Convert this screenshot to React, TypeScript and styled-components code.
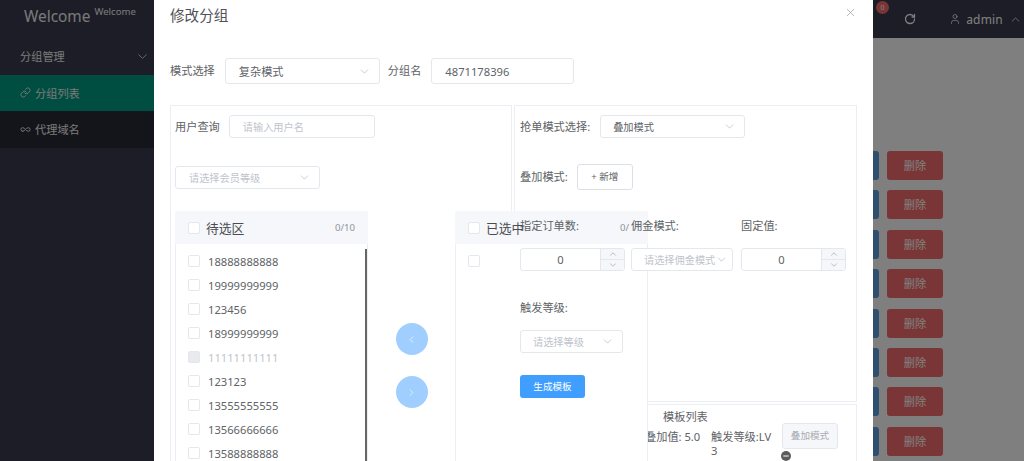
import React from "react";
import styled, { createGlobalStyle } from "styled-components";
import { ChevronDown, ChevronUp, ChevronLeft, ChevronRight, Link, Infinity as InfinityIcon, RotateCw, User, X, Minus } from "lucide-react";

const Global = createGlobalStyle`
  html, body { margin: 0; padding: 0; height: 100%; }
  body { font-family: "Noto Sans", "Noto Sans CJK SC", sans-serif; color: #606266; }
  #root { height: 100%; }
  * { box-sizing: border-box; }
`;

const Page = styled.div`
  position: relative;
  display: flex;
  width: 1024px;
  height: 461px;
  overflow: hidden;
  background: #fff;
`;

const Sidebar = styled.aside`
  width: 154px;
  flex: none;
  background: #383a4c;
  color: #f2f2f2;
`;
const Logo = styled.div`
  height: 38px;
  padding: 6px 0 0 24px;
  font-size: 15.4px;
  line-height: 22px;
  white-space: nowrap;
  sup { font-size: 9.6px; margin-left: 4px; position: relative; top: -1px; vertical-align: 6px; line-height: 0; }
`;
const MenuRow = styled.div<{ $bg?: string }>`
  display: flex;
  align-items: center;
  gap: 4px;
  height: 36.5px;
  padding-left: 20px;
  padding-right: 4px;
  font-size: 11.2px;
  background: ${(p) => p.$bg || "transparent"};
`;
const MenuLabel = styled.span`
  flex: 1;
`;

const Main = styled.main`
  flex: 1;
  display: flex;
  flex-direction: column;
  min-width: 0;
`;
const TopBar = styled.header`
  height: 38px;
  flex: none;
  display: flex;
  align-items: center;
  justify-content: flex-end;
  background: #383a4c;
  color: #fff;
  padding-right: 2px;
  font-size: 12px;
`;
const Badge = styled.span`
  position: absolute;
  left: 876px;
  top: 1px;
  width: 13px;
  height: 13px;
  border-radius: 50%;
  background: #f56c6c;
  font-size: 7px;
  line-height: 13px;
  text-align: center;
  color: #fff;
`;
const Refresh = styled.span`
  display: flex;
  margin-right: 33px;
`;
const UserName = styled.span`
  margin: 0 6px 0 5px;
  letter-spacing: 0.2px;
`;
const Rows = styled.div`
  display: flex;
  flex-direction: column;
  gap: 10.4px;
  padding: 113px 81px 0 0;
  align-items: flex-end;
`;
const ActionRow = styled.div`
  display: flex;
  gap: 8px;
  flex: none;
`;
const ActionButton = styled.div<{ $bg: string }>`
  width: 56px;
  height: 29px;
  border-radius: 3px;
  background: ${(p) => p.$bg};
  color: #fff;
  font-size: 11.2px;
  line-height: 29px;
  text-align: center;
`;

const Overlay = styled.div`
  position: absolute;
  inset: 0;
  background: rgba(0, 0, 0, 0.5);
`;
const Dialog = styled.div`
  width: 719px;
  height: 461px;
  margin-left: 154px;
  background: #fff;
  padding: 0 16px;
  overflow: hidden;
  position: relative;
`;
const Title = styled.div`
  font-size: 14.6px;
  line-height: 20px;
  padding-top: 5px;
  color: #4f5157;
`;
const Close = styled.span`
  position: absolute;
  right: 16px;
  top: 6px;
  display: flex;
  color: #909399;
`;
const TopForm = styled.div`
  display: flex;
  align-items: center;
  height: 26px;
  margin-top: 33px;
`;
const Label = styled.span`
  font-size: 11.2px;
  line-height: 16px;
  white-space: nowrap;
  color: #606266;
`;
const Field = styled.div<{ $w: number; $h?: number; $ml?: number; $mr?: number; $muted?: boolean; $pl?: number }>`
  flex: none;
  display: flex;
  align-items: center;
  justify-content: space-between;
  width: ${(p) => p.$w}px;
  height: ${(p) => p.$h || 23}px;
  margin-left: ${(p) => p.$ml || 0}px;
  margin-right: ${(p) => p.$mr || 0}px;
  padding: 0 8px 0 ${(p) => p.$pl || 13}px;
  border: 1px solid #e4e7ed;
  border-radius: 3px;
  background: #fff;
  font-size: ${(p) => (p.$h ? 11.2 : 10.2)}px;
  color: ${(p) => (p.$muted ? "#c0c4cc" : "#606266")};
  white-space: nowrap;
  overflow: hidden;
  svg { flex: none; color: #a8abb2; }
`;
const Columns = styled.div`
  display: flex;
  gap: 2px;
  margin-top: 21px;
  align-items: flex-start;
`;
const LeftPanel = styled.section`
  width: 342px;
  height: 400px;
  flex: none;
  border: 1px solid #ebeef5;
  padding: 9px 4px;
`;
const RightColumn = styled.div`
  width: 343px;
  flex: none;
  display: flex;
  flex-direction: column;
  gap: 2px;
`;
const RightPanel = styled.section`
  height: 297px;
  border: 1px solid #ebeef5;
`;
const FormLayer = styled.div`
  position: relative;
  z-index: 2;
  padding: 9px 5px;
`;
const Row = styled.div<{ $mt?: number; $gap?: number }>`
  display: flex;
  align-items: center;
  gap: ${(p) => p.$gap || 0}px;
  margin-top: ${(p) => p.$mt || 0}px;
`;
const Transfer = styled.div`
  position: relative;
  z-index: 1;
  display: flex;
  width: 473px;
  margin-top: 22px;
`;
const TransferPanel = styled.div`
  width: 193px;
  height: 309px;
  flex: none;
  background: #fff;
  border: 1px solid #ebeef5;
  border-radius: 3px 3px 0 0;
  position: relative;
`;
const TransferHead = styled.div`
  display: flex;
  align-items: center;
  height: 33px;
  margin: -1px -1px 0;
  padding: 0 13px;
  background: #f5f7fa;
  border-radius: 3px 3px 0 0;
`;
const HeadTitle = styled.span`
  flex: 1;
  margin-left: 6px;
  font-size: 12.8px;
  color: #4a4c52;
`;
const Count = styled.span<{ $mr?: number }>`
  font-size: 9.6px;
  color: #909399;
  margin-right: ${(p) => p.$mr || 0}px;
`;
const Check = styled.span<{ $off?: boolean }>`
  width: 12px;
  height: 12px;
  flex: none;
  border: 1px solid #e4e7ed;
  border-radius: 2px;
  background: ${(p) => (p.$off ? "#e9eaee" : "#fff")};
`;
const List = styled.div`
  padding-top: 5px;
`;
const Item = styled.div<{ $off?: boolean }>`
  display: flex;
  align-items: center;
  gap: 8px;
  height: 24px;
  padding-left: 12px;
  font-size: 11.2px;
  color: ${(p) => (p.$off ? "#c0c4cc" : "#606266")};
`;
const Scrollbar = styled.span`
  position: absolute;
  right: 0;
  top: 37px;
  bottom: 0;
  width: 2.5px;
  background: #666;
`;
const Arrows = styled.div`
  width: 87px;
  flex: none;
  display: flex;
  flex-direction: column;
  align-items: center;
  justify-content: center;
  gap: 21px;
  height: 309px;
`;
const Round = styled.span`
  width: 32px;
  height: 32px;
  border-radius: 50%;
  background: #a0cfff;
  color: #fff;
  display: flex;
  align-items: center;
  justify-content: center;
`;
const PlainButton = styled.div`
  width: 56px;
  height: 26px;
  border: 1px solid #dcdfe6;
  border-radius: 3px;
  font-size: 9.6px;
  line-height: 24px;
  text-align: center;
  color: #606266;
`;
const Triple = styled.div`
  display: grid;
  grid-template-columns: 105px 102px 105px;
  column-gap: 6px;
  margin-top: 28px;
  row-gap: 14px;
  & > *:nth-child(3n) { margin-left: 2px; }
`;
const Stepper = styled.div`
  display: flex;
  width: 105px;
  height: 23px;
  border: 1px solid #e4e7ed;
  border-radius: 3px;
  overflow: hidden;
  background: #fff;
`;
const StepValue = styled.span`
  flex: 1;
  text-align: center;
  font-size: 11.2px;
  line-height: 21px;
`;
const StepControls = styled.div`
  width: 24px;
  display: flex;
  flex-direction: column;
  background: #f5f7fa;
  border-left: 1px solid #e4e7ed;
  span {
    flex: 1;
    display: flex;
    align-items: center;
    justify-content: center;
    color: #909399;
  }
  span + span { border-top: 1px solid #e4e7ed; }
`;
const Primary = styled.div`
  width: 65px;
  height: 23px;
  margin-top: 22px;
  background: #409eff;
  border-radius: 3px;
  color: #fff;
  font-size: 9.6px;
  line-height: 23px;
  text-align: center;
`;
const TemplatePanel = styled.section`
  height: 60px;
  border: 1px solid #ebeef5;
  position: relative;
`;
const TemplateTitle = styled.div`
  font-size: 11.2px;
  line-height: 16px;
  padding: 4px 0 0 148px;
`;
const TemplateRow = styled.div`
  display: flex;
  align-items: flex-start;
  padding: 5px 0 0 130px;
  font-size: 11.2px;
  line-height: 14px;
`;
const TemplateValue = styled.span`
  width: 66px;
  flex: none;
  white-space: nowrap;
`;
const TemplateLevel = styled.span`
  width: 62px;
  flex: none;
`;
const TemplateAction = styled.div`
  margin: -7px 0 0 9px;
  display: flex;
  flex-direction: column;
  align-items: flex-start;
`;
const MutedButton = styled(PlainButton)`
  color: #a8abb2;
  background: #f5f7fa;
  border-color: #e4e7ed;
`;
const MinusDot = styled.span`
  width: 10px;
  height: 10px;
  margin: 2px 0 0 -1px;
  border-radius: 50%;
  background: #5c5c5c;
  color: #fff;
  display: flex;
  align-items: center;
  justify-content: center;
`;

const candidates = ["18888888888", "19999999999", "123456", "18999999999", "11111111111", "123123", "13555555555", "13566666666", "13588888888"];
const rows = [0, 1, 2, 3, 4, 5, 6, 7];

function NumberStep() {
  return (
    <Stepper>
      <StepValue>0</StepValue>
      <StepControls>
        <span><ChevronUp size={10} strokeWidth={1.4} /></span>
        <span><ChevronDown size={10} strokeWidth={1.4} /></span>
      </StepControls>
    </Stepper>
  );
}

export default function App() {
  return (
    <Page>
      <Global />
      <Sidebar>
        <Logo>Welcome<sup>Welcome</sup></Logo>
        <MenuRow>
          <MenuLabel>分组管理</MenuLabel>
          <ChevronDown size={15} strokeWidth={1.3} />
        </MenuRow>
        <MenuRow $bg="#009a82">
          <Link size={11} strokeWidth={2} />
          分组列表
        </MenuRow>
        <MenuRow $bg="#282a34">
          <InfinityIcon size={11} strokeWidth={2} />
          代理域名
        </MenuRow>
      </Sidebar>
      <Main>
        <TopBar>
          <Refresh><RotateCw size={12} strokeWidth={2.6} /></Refresh>
          <User size={12} strokeWidth={1.5} />
          <UserName>admin</UserName>
          <ChevronUp size={13} strokeWidth={1.4} />
        </TopBar>
        <Rows>
          {rows.map((r) => (
            <ActionRow key={r}>
              <ActionButton $bg="#5f9fdf">编辑</ActionButton>
              <ActionButton $bg="#f56c6c">删除</ActionButton>
            </ActionRow>
          ))}
        </Rows>
      </Main>
      <Badge>0</Badge>
      <Overlay>
        <Dialog>
          <Title>修改分组</Title>
          <Close><X size={13} strokeWidth={1.2} /></Close>
          <TopForm>
            <Label>模式选择</Label>
            <Field $w={155} $h={26} $ml={10} $mr={8}>
              复杂模式
              <ChevronDown size={13} strokeWidth={1.1} />
            </Field>
            <Label>分组名</Label>
            <Field $w={143} $h={26} $ml={10}>4871178396</Field>
          </TopForm>
          <Columns>
            <LeftPanel>
              <Row $gap={9}>
                <Label>用户查询</Label>
                <Field $w={146} $pl={13} $muted>请输入用户名</Field>
              </Row>
              <Row $mt={28}>
                <Field $w={145} $muted>
                  请选择会员等级
                  <ChevronDown size={13} strokeWidth={1.1} />
                </Field>
              </Row>
              <Transfer>
                <TransferPanel>
                  <TransferHead>
                    <Check />
                    <HeadTitle>待选区</HeadTitle>
                    <Count>0/10</Count>
                  </TransferHead>
                  <List>
                    {candidates.map((c, i) => (
                      <Item key={c} $off={i === 4}>
                        <Check $off={i === 4} />
                        {c}
                      </Item>
                    ))}
                  </List>
                  <Scrollbar />
                </TransferPanel>
                <Arrows>
                  <Round><ChevronLeft size={11} strokeWidth={1.4} /></Round>
                  <Round><ChevronRight size={11} strokeWidth={1.4} /></Round>
                </Arrows>
                <TransferPanel>
                  <TransferHead>
                    <Check />
                    <HeadTitle>已选中</HeadTitle>
                    <Count $mr={6}>0/</Count>
                  </TransferHead>
                  <List>
                    <Item><Check /></Item>
                  </List>
                </TransferPanel>
              </Transfer>
            </LeftPanel>
            <RightColumn>
              <RightPanel>
                <FormLayer>
                  <Row $gap={10}>
                    <Label>抢单模式选择:</Label>
                    <Field $w={145} $pl={12}>
                      叠加模式
                      <ChevronDown size={13} strokeWidth={1.1} />
                    </Field>
                  </Row>
                  <Row $mt={26} $gap={9}>
                    <Label>叠加模式:</Label>
                    <PlainButton>+ 新增</PlainButton>
                  </Row>
                  <Triple>
                    <Label>指定订单数:</Label>
                    <Label>佣金模式:</Label>
                    <Label>固定值:</Label>
                    <NumberStep />
                    <Field $w={102} $pl={12} $muted>
                      请选择佣金模式
                      <ChevronDown size={13} strokeWidth={1.1} />
                    </Field>
                    <NumberStep />
                  </Triple>
                  <Row $mt={29}><Label>触发等级:</Label></Row>
                  <Row $mt={14}>
                    <Field $w={103} $pl={12} $muted>
                      请选择等级
                      <ChevronDown size={13} strokeWidth={1.1} />
                    </Field>
                  </Row>
                  <Primary>生成模板</Primary>
                </FormLayer>
              </RightPanel>
              <TemplatePanel>
                <TemplateTitle>模板列表</TemplateTitle>
                <TemplateRow>
                  <TemplateValue>叠加值: 5.0</TemplateValue>
                  <TemplateLevel>触发等级:LV 3</TemplateLevel>
                  <TemplateAction>
                    <MutedButton>叠加模式</MutedButton>
                    <MinusDot><Minus size={8} strokeWidth={3} /></MinusDot>
                  </TemplateAction>
                </TemplateRow>
              </TemplatePanel>
            </RightColumn>
          </Columns>
        </Dialog>
      </Overlay>
    </Page>
  );
}
